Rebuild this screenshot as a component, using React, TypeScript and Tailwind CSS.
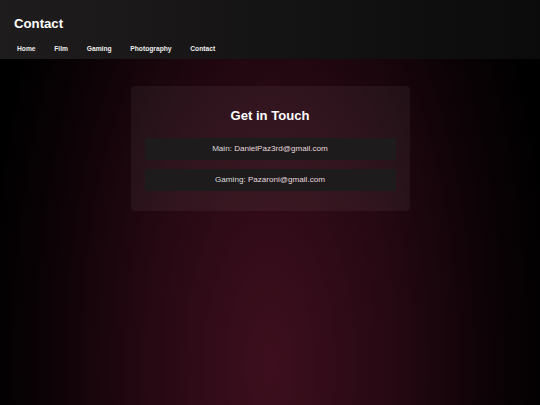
import React from 'react'

const navLinks = ['Home', 'Film', 'Gaming', 'Photography', 'Contact']

const contacts = [
  { label: 'Main', email: 'DanielPaz3rd@gmail.com' },
  { label: 'Gaming', email: 'Pazaroni@gmail.com' },
]

export default function App() {
  return (
    <div
      className="min-h-screen w-full bg-[radial-gradient(ellipse_290px_650px_at_50%_90%,#3e0f1e_0%,#240811_45%,#0a0205_80%,#000_100%)] text-white"
      style={{ fontFamily: '"Liberation Sans", Arial, sans-serif' }}
    >
      {/* header */}
      <header className="h-[59px] bg-[linear-gradient(90deg,#1f1c1d_0%,#141314_55%,#0b0b0b_100%)] px-[14px] pt-[15px]">
        <h1 className="text-[13.2px] font-bold leading-[18px]">Contact</h1>
        <nav className="mt-[11px] ml-[3px] flex gap-[18.7px]">
          {navLinks.map((link) => (
            <a key={link} className="text-[6.7px] font-bold leading-[10px] text-[#eeeeee]">
              {link}
            </a>
          ))}
        </nav>
      </header>

      {/* contact card */}
      <main className="flex justify-center pt-[27px]">
        <section className="w-[279px] rounded-[4px] bg-[#ffffff0d] px-[14px] pt-[21px] pb-[20px]">
          <h2 className="text-center text-[13.1px] font-bold leading-[18px]">Get in Touch</h2>
          <div className="mt-[13px] flex flex-col gap-[9px]">
            {contacts.map((c) => (
              <div
                key={c.label}
                className="flex h-[22px] items-center justify-center bg-[#1d1b1c] text-[8.1px] text-[#dddddd]"
              >
                {c.label}:&nbsp;<span className="text-[#e9d9df]">{c.email}</span>
              </div>
            ))}
          </div>
        </section>
      </main>
    </div>
  )
}
